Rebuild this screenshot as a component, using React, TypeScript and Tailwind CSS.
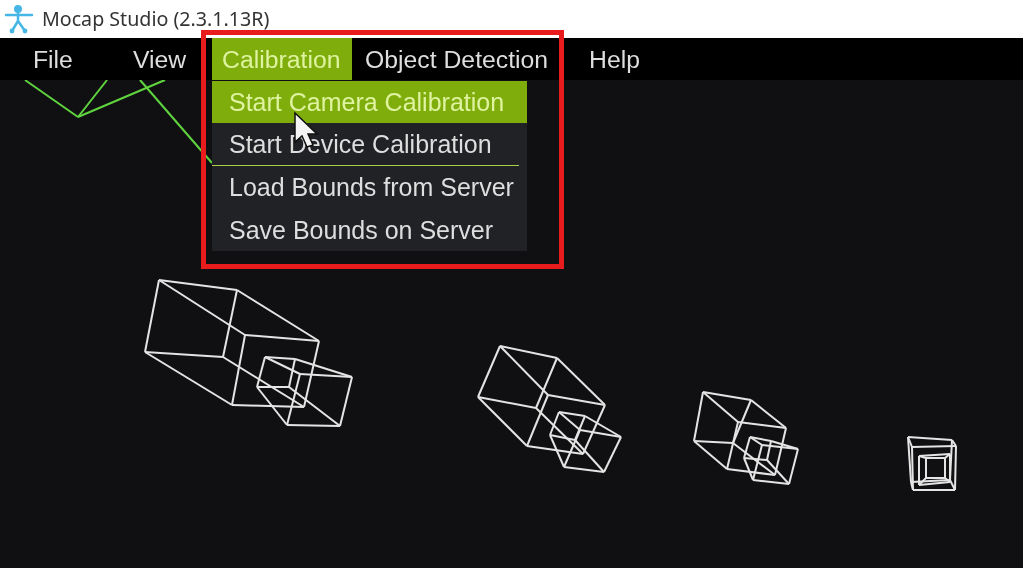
import { Fragment } from 'react';

type Pt = [number, number];

// box corners: a b c d on the far face, e f g h on the near one
const EDGES: [number, number][] = [
  [0, 1], [1, 2], [0, 3], [3, 2], [0, 4], [4, 5], [5, 1],
  [4, 6], [6, 3], [6, 7], [7, 2], [5, 7],
];

const BOXES: Pt[][] = [
  [[159, 280], [237, 290], [319, 341], [245, 335], [145, 352], [223, 357], [232, 405], [304, 407]],
  [[265, 357], [295, 359], [352, 377], [300, 374], [257, 387], [289, 387], [287, 425], [340, 426]],
  [[500, 346], [557, 358], [605, 405], [548, 395], [478, 397], [536, 408], [527, 446], [583, 454]],
  [[559, 412], [585, 416], [621, 437], [580, 430], [550, 435], [575, 440], [564, 467], [604, 472]],
  [[703, 392], [751, 400], [786, 428], [738, 422], [694, 441], [733, 443], [727, 469], [775, 475]],
  [[750, 437], [771, 441], [798, 449], [762, 445], [744, 458], [767, 460], [753, 480], [789, 484]],
  [[908, 437], [952, 440], [956, 446], [912, 447], [911, 482], [950, 480], [913, 490], [955, 490]],
  [[919, 456], [950, 454], [945, 458], [926, 458], [919, 485], [950, 482], [926, 478], [945, 478]],
];

const GREEN_LINES: [number, number, number, number][] = [
  [25, 80, 78, 117],
  [107, 80, 78, 117],
  [78, 117, 165, 80],
  [140, 80, 212, 163],
];

const MENUS = [
  { name: 'File', className: 'ml-[33px]' },
  { name: 'View', className: 'ml-[60px]' },
  { name: 'Calibration', className: 'ml-[26px] h-full w-[140px] bg-[#7fae0c] pl-[10px] pt-[2px] text-[#dff3a0]' },
  { name: 'Object Detection', className: 'ml-[13px]' },
  { name: 'Help', className: 'ml-[41px]' },
];

function Wireframes() {
  return (
    <svg className="absolute left-0 top-0" width="1023" height="568" viewBox="0 0 1023 568" fill="none">
      {GREEN_LINES.map(([x1, y1, x2, y2], i) => (
        <line key={i} x1={x1} y1={y1} x2={x2} y2={y2} stroke="#5fd43f" strokeWidth="2" />
      ))}
      {BOXES.map((box, i) => (
        <Fragment key={i}>
          {EDGES.map(([from, to]) => (
            <line
              key={`${from}-${to}`}
              x1={box[from][0]}
              y1={box[from][1]}
              x2={box[to][0]}
              y2={box[to][1]}
              stroke="#e4e4e4"
              strokeWidth="2"
            />
          ))}
        </Fragment>
      ))}
    </svg>
  );
}

function AppIcon() {
  return (
    <svg width="34" height="34" viewBox="0 0 34 34" fill="none" stroke="#45b6e6" strokeWidth="2.5" strokeLinecap="round">
      <circle cx="18" cy="7" r="4" fill="#45b6e6" stroke="none" />
      <path d="M6 13h26M18 9v10M18 19l-6 10M18 19l7 10" />
      <circle cx="12" cy="29" r="2.4" fill="#45b6e6" stroke="none" />
      <circle cx="25" cy="29" r="2.4" fill="#45b6e6" stroke="none" />
    </svg>
  );
}

export default function App() {
  return (
    <div className="relative flex h-[568px] w-[1023px] flex-col overflow-hidden bg-[#101012] font-['Liberation_Sans',sans-serif] blur-[0.4px]">
      <div className="flex h-[38px] items-center bg-white text-[#333]">
        <AppIcon />
        <span className="-mt-px ml-[8px] font-['Noto_Sans',sans-serif] text-[19.65px]">Mocap Studio (2.3.1.13R)</span>
      </div>

      <div className="relative z-10 flex h-[42px] items-center bg-black text-[24.75px] text-[#dedede]">
        {MENUS.map((menu) => (
          <div key={menu.name} className={`flex items-center pt-[2px] ${menu.className}`}>
            {menu.name}
          </div>
        ))}
      </div>

      <Wireframes />

      <div className="absolute left-[212px] top-[81px] z-10 flex w-[315px] flex-col bg-[#212226] text-[25px] text-[#dedede]">
        <div className="flex h-[42px] items-center bg-[#7fae0c] pl-[17px] pt-px text-[#dff3a0]">Start Camera Calibration</div>
        <div className="flex h-[42px] items-center pl-[17px] pt-px">Start Device Calibration</div>
        <div className="mr-[8px] h-px bg-[#a8d048]" />
        <div className="flex h-[43px] items-center pl-[17px] pt-px">Load Bounds from Server</div>
        <div className="flex h-[42px] items-center pl-[17px] pt-px">Save Bounds on Server</div>
      </div>

      <svg className="absolute left-[293px] top-[111px] z-20" width="26" height="40" viewBox="0 0 26 40">
        <path d="M2 2v29l7-6 5 11 6-2-5-11h9z" fill="#f4f4f4" stroke="#111" strokeWidth="1.5" />
      </svg>

      <div className="absolute left-[201px] top-[30px] z-30 h-[239px] w-[363px] border-[5px] border-[#e81c1c]" />
    </div>
  );
}
